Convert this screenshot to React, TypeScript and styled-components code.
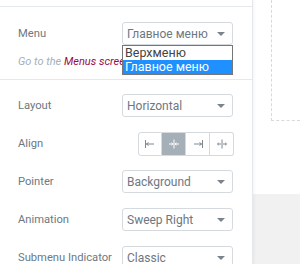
import styled, { createGlobalStyle } from 'styled-components';

const GlobalStyle = createGlobalStyle`
  body {
    margin: 0;
    font-family: Roboto, 'Liberation Sans', sans-serif;
    background: #fff;
  }
`;

const Page = styled.div`
  display: flex;
  width: 300px;
  height: 264px;
  overflow: hidden;
`;

const Panel = styled.aside`
  width: 252px;
  flex-shrink: 0;
  padding-top: 6px;
  background: #fff;
  border-right: 1px solid #e6e9ec;
  box-shadow: 1px 0 3px rgba(0, 0, 0, 0.05);
  z-index: 1;
`;

const Section = styled.section<{ $top: number }>`
  border-top: 1px solid #e6e9ec;
  padding: ${(p) => p.$top}px 19px 0 18px;
`;

const Row = styled.div`
  display: flex;
  align-items: center;
  justify-content: space-between;
  height: 23px;
  margin-bottom: 15px;
  position: relative;
`;

const Label = styled.span`
  font-size: 11.2px;
  color: #6d7882;
`;

const Select = styled.div`
  box-sizing: border-box;
  width: 111px;
  height: 23px;
  border: 1px solid #d5dadf;
  border-radius: 3px;
  display: flex;
  align-items: center;
  justify-content: space-between;
  padding: 0 7px 0 4px;
  font-size: 12px;
  color: #6d7882;

  &::after {
    content: '';
    border-left: 4px solid transparent;
    border-right: 4px solid transparent;
    border-top: 4px solid #7a838b;
  }
`;

const Options = styled.ul`
  position: absolute;
  top: 23px;
  right: 0;
  box-sizing: border-box;
  width: 111px;
  margin: 0;
  padding: 0;
  list-style: none;
  background: #fff;
  border: 1px solid #767676;
  font-size: 12.5px;
  z-index: 2;
`;

const Option = styled.li<{ $selected?: boolean }>`
  height: 14px;
  line-height: 14px;
  padding-left: 2px;
  color: ${(p) => (p.$selected ? '#fff' : '#444')};
  background: ${(p) => (p.$selected ? '#1e90ff' : 'transparent')};
`;

const Hint = styled.p`
  margin: -5px 0 0;
  height: 24px;
  font-size: 11px;
  font-style: italic;
  color: #a4afb7;
  white-space: nowrap;
  overflow: hidden;

  a {
    color: #9b0a46;
    text-decoration: none;
  }
`;

const ButtonGroup = styled.div`
  display: flex;
  height: 24px;
  margin-right: -1px;
`;

const AlignButton = styled.button<{ $active?: boolean }>`
  width: 24px;
  height: 24px;
  padding: 0;
  display: flex;
  align-items: center;
  justify-content: center;
  border: 1px solid #d5dadf;
  border-left-width: 0;
  background: ${(p) => (p.$active ? '#a4afb7' : '#fff')};
  color: ${(p) => (p.$active ? '#fff' : '#7d8890')};

  &:first-child {
    border-left-width: 1px;
    border-radius: 3px 0 0 3px;
  }
  &:last-child {
    border-radius: 0 3px 3px 0;
  }
`;

const Preview = styled.main`
  flex: 1;
  display: flex;
  flex-direction: column;
`;

const Canvas = styled.div`
  height: 194px;
  padding-left: 18px;
  background: #fff;
`;

const DropZone = styled.div`
  height: 121px;
  border-left: 1px dashed #d5dadf;
  border-bottom: 1px dashed #d5dadf;
  box-sizing: border-box;
`;

const Footer = styled.div`
  flex: 1;
  background: #f1f1f1;
`;

const AlignIcon = ({ kind }: { kind: 'left' | 'center' | 'right' | 'stretch' }) => (
  <svg width="12" height="12" viewBox="0 0 12 12" fill="none" stroke="currentColor" strokeWidth="1">
    {kind === 'left' && (
      <>
        <path d="M1.5 2v8" />
        <path d="M2 6h8M2.5 6l2-1.5M2.5 6l2 1.5" />
      </>
    )}
    {kind === 'right' && (
      <>
        <path d="M10.5 2v8" />
        <path d="M2 6h8M9.5 6l-2-1.5M9.5 6l-2 1.5" />
      </>
    )}
    {kind === 'center' && (
      <>
        <path d="M6 1.5v9" />
        <path d="M1 6h3.5M3.5 4.8L5 6 3.5 7.2M11 6H7.5M8.5 4.8L7 6l1.5 1.2" />
      </>
    )}
    {kind === 'stretch' && (
      <>
        <path d="M6 1.5v9" />
        <path d="M1.5 6H5M2.8 4.8L1.5 6l1.3 1.2M10.5 6H7M9.2 4.8L10.5 6 9.2 7.2" />
      </>
    )}
  </svg>
);

const selects = [
  { label: 'Layout', value: 'Horizontal' },
  { label: 'Pointer', value: 'Background' },
  { label: 'Animation', value: 'Sweep Right' },
  { label: 'Submenu Indicator', value: 'Classic' },
];

const App = () => {
  return (
    <Page>
      <GlobalStyle />
      <Panel>
        <Section $top={15}>
          <Row>
            <Label>Menu</Label>
            <Select>Главное меню</Select>
            <Options>
              <Option>Верхменю</Option>
              <Option $selected>Главное меню</Option>
            </Options>
          </Row>
          <Hint>
            Go to the <a href="#">Menus screen</a> to manage your menus.
          </Hint>
        </Section>
        <Section $top={14}>
          {selects.slice(0, 1).map((s) => (
            <Row key={s.label}>
              <Label>{s.label}</Label>
              <Select>{s.value}</Select>
            </Row>
          ))}
          <Row>
            <Label>Align</Label>
            <ButtonGroup>
              <AlignButton><AlignIcon kind="left" /></AlignButton>
              <AlignButton $active><AlignIcon kind="center" /></AlignButton>
              <AlignButton><AlignIcon kind="right" /></AlignButton>
              <AlignButton><AlignIcon kind="stretch" /></AlignButton>
            </ButtonGroup>
          </Row>
          {selects.slice(1).map((s) => (
            <Row key={s.label}>
              <Label>{s.label}</Label>
              <Select>{s.value}</Select>
            </Row>
          ))}
        </Section>
      </Panel>
      <Preview>
        <Canvas>
          <DropZone />
        </Canvas>
        <Footer />
      </Preview>
    </Page>
  );
};

export default App;
